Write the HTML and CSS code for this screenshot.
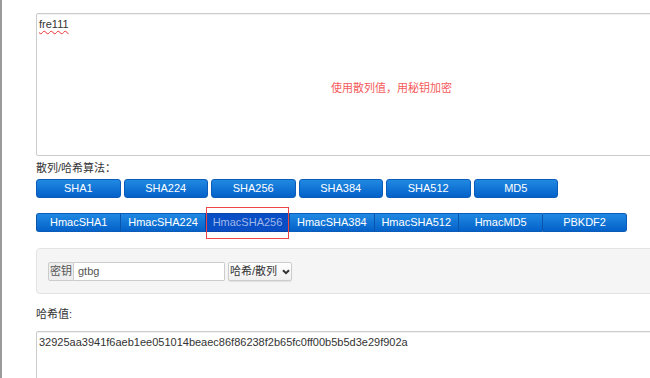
FILE: index.html
```html
<!DOCTYPE html>
<html>
  <head>
    <meta charset="utf-8">
    <link rel="stylesheet" href="styles.css">
  </head>
  <body>
    <div class="page">
      <div class="box box-top">
        <span class="typo">fre111</span>
        <span class="note">使用散列值，用秘钥加密</span>
      </div>

      <div class="label label-algo">散列/哈希算法：</div>
      <div class="row">
        <button class="btn">SHA1</button>
        <button class="btn">SHA224</button>
        <button class="btn">SHA256</button>
        <button class="btn">SHA384</button>
        <button class="btn">SHA512</button>
        <button class="btn">MD5</button>
      </div>

      <div class="group">
        <button class="btn">HmacSHA1</button>
        <button class="btn">HmacSHA224</button>
        <button class="btn active">HmacSHA256<span class="mark"></span></button>
        <button class="btn">HmacSHA384</button>
        <button class="btn">HmacSHA512</button>
        <button class="btn">HmacMD5</button>
        <button class="btn">PBKDF2</button>
      </div>

      <div class="panel">
        <div class="input-group">
          <span class="addon">密钥</span>
          <span class="field">gtbg</span>
        </div>
        <button class="dropdown">哈希/散列
          <svg width="8" height="6" viewBox="0 0 8 6"><path d="M1 1.2 L4 4.2 L7 1.2" fill="none" stroke="#333" stroke-width="2"/></svg>
        </button>
      </div>

      <div class="label label-result">哈希值:</div>
      <div class="box box-result">32925aa3941f6aeb1ee051014beaec86f86238f2b65fc0ff00b5b5d3e29f902a</div>
    </div>
  </body>
</html>
```

FILE: styles.css
```css
body {
  margin: 0;
  overflow: hidden;
  font-family: "Liberation Sans", "Noto Sans CJK SC", sans-serif;
  font-size: 11px;
  color: #333;
}

.page {
  border-left: 2px solid #9a9a9a;
  height: 378px;
  box-sizing: border-box;
  padding: 13px 0 0 34px;
}

.box {
  width: 709px;
  border: 1px solid #ccc;
  border-radius: 2px;
  box-shadow: inset 0 1px 1px rgba(0, 0, 0, 0.06);
  background: #fff;
  box-sizing: border-box;
  padding: 3px 2px;
  line-height: 14px;
}

.box-top {
  position: relative;
  height: 143px;
}

.typo {
  text-decoration: underline wavy #e33;
  text-decoration-thickness: 1px;
  text-underline-offset: 2px;
}

.note {
  position: absolute;
  left: 294px;
  top: 67px;
  color: #f45b5b;
  font-size: 11px;
}

.label {
  line-height: 14px;
}

.label-algo {
  margin-top: 5px;
}

.row {
  display: flex;
  gap: 3px;
  margin-top: 4px;
}

.btn {
  position: relative;
  width: 84.5px;
  height: 19px;
  padding: 0;
  border: 1px solid #0b5cb9;
  border-radius: 3px;
  background: linear-gradient(#2089e2, #0461c9);
  color: #fff;
  font-family: inherit;
  font-size: 11px;
  line-height: 17px;
}

.group {
  display: flex;
  margin-top: 15px;
}

.group .btn {
  width: 84.4px;
  border-radius: 0;
  border-left-color: #0a55ab;
  border-right: none;
}

.group .btn:first-child {
  border-radius: 3px 0 0 3px;
}

.group .btn:last-child {
  border-radius: 0 3px 3px 0;
  border-right: 1px solid #0b5cb9;
}

.group .active {
  background: #0a4ec6;
  color: #9fb8e8;
  border-color: #0a45a8;
}

.mark {
  position: absolute;
  left: 0;
  right: 0;
  top: -7px;
  bottom: -8px;
  border: 1.5px solid #ee4444;
}

.panel {
  display: flex;
  align-items: center;
  width: 709px;
  height: 46px;
  box-sizing: border-box;
  margin-top: 16px;
  padding: 0 11px;
  background: #f5f5f5;
  border: 1px solid #e3e3e3;
  border-radius: 4px;
}

.input-group {
  display: flex;
  height: 19px;
}

.addon {
  width: 26px;
  box-sizing: border-box;
  border: 1px solid #ccc;
  border-radius: 2px 0 0 2px;
  background: #eee;
  color: #555;
  text-align: center;
  line-height: 17px;
}

.field {
  width: 151px;
  box-sizing: border-box;
  border: 1px solid #ccc;
  border-left: none;
  border-radius: 0 2px 2px 0;
  background: #fff;
  padding-left: 4px;
  line-height: 17px;
  color: #555;
}

.dropdown {
  margin-left: 3px;
  height: 19px;
  width: 64px;
  padding: 0;
  border: 1px solid #ccc;
  border-radius: 2px;
  background: linear-gradient(#fff, #f0f0f0);
  box-shadow: 0 1px 1px rgba(0, 0, 0, 0.08);
  color: #333;
  font-family: inherit;
  font-size: 11px;
  line-height: 17px;
}

.dropdown svg {
  margin-left: 2px;
  vertical-align: 0;
}

.label-result {
  margin-top: 13px;
}

.box-result {
  margin-top: 10px;
  height: 80px;
  padding-top: 3px;
}
```
